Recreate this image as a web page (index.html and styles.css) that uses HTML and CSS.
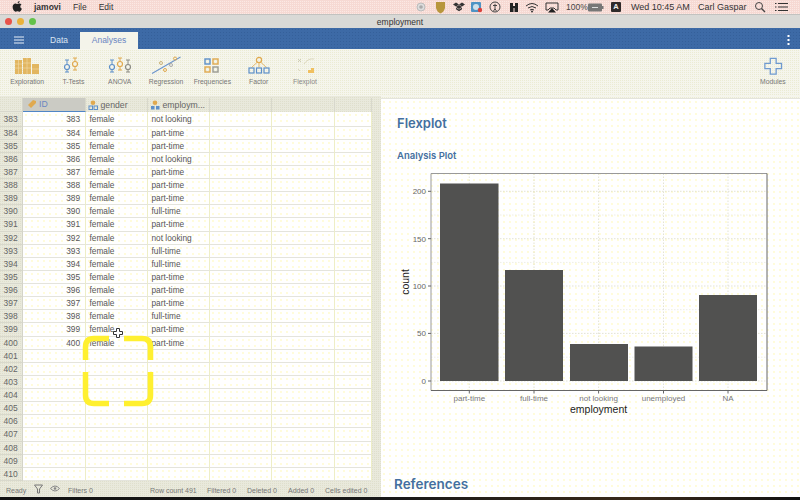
FILE: index.html
```html
<!DOCTYPE html>
<html lang="en">
<head>
<meta charset="utf-8">
<title>employment - jamovi</title>
<link rel="stylesheet" href="styles.css">
</head>
<body>
<div class="app">
  <header class="menubar">
    <svg class="apple" width="12" height="14" viewBox="0 0 12 14"><path d="M8.6 1c.1 1-.8 2.2-2 2.2C6.500 2.100 7.500 1.100 8.600 1zM6.200 3.900c.6 0 1.200-.5 2.200-.5.800 0 1.600.4 2.100 1.100-1.800 1-1.500 3.500.4 4.200-.5 1.300-1.500 3-2.500 3-.8 0-1-.5-1.900-.5s-1.200.5-1.900.5C3.300 11.700 1.600 9.500 1.600 7.100c0-2.300 1.500-3.600 2.800-3.600.8 0 1.300.4 1.800.4z" fill="#222"/></svg>
    <span class="menu-app">jamovi</span>
    <span class="menu-item">File</span>
    <span class="menu-item">Edit</span>
    <svg class="tray" width="196" height="14" viewBox="412 0 196 14">
      <circle cx="421" cy="7" r="4" fill="#ddd" stroke="#bbb"/><circle cx="421" cy="7" r="1.800" fill="#aaa"/>
      <path d="M436 2h9v6q-1 4-4.500 5.500Q437 12 436 8z" fill="#b8963c"/>
      <path d="M456 3l3 2-3 2-3-2zM462 3l3 2-3 2-3-2zM456 7.500l3-2 3 2-3 2zM459 10l3-1.800v1.600l-3 2-3-2V8.200z" fill="#333" transform="translate(0 -.5)"/>
      <rect x="471" y="2" width="10" height="10" rx="1" fill="#4f93c4"/><circle cx="476" cy="7" r="3" fill="#cfe0ea"/><circle cx="480" cy="10" r="2.200" fill="#d9413b"/>
      <circle cx="495" cy="7" r="5" fill="none" stroke="#444"/><path d="M495 3.800v6M493 5.500h4M495 9l-1.500 2M495 9l1.500 2" stroke="#444" fill="none"/>
      <path d="M510 3h3v3h2V3h3v9h-3.500V8h-1v4H510z" fill="#222"/>
      <path d="M526 6q6-5 12 0M528 8q4-3 8 0M530 10q2-1.500 4 0" fill="none" stroke="#333"/><circle cx="532" cy="11.500" r="1" fill="#333"/>
      <path d="M546 3h12v7h-2l-2-2h-4l-2 2h-2z" fill="none" stroke="#333"/><path d="M552 8l4 4.500h-8z" fill="#222"/>
      <text class="tray-text" x="566" y="10">100%</text>
      <rect x="588" y="3.500" width="14" height="8" rx="1" fill="#777"/><path d="M592 7.500h6" stroke="#ddd"/><rect x="602" y="6" width="1.500" height="3" fill="#777"/>
    </svg>
    <span class="menu-a">A</span>
    <span class="menu-clock">Wed 10:45 AM</span>
    <span class="menu-user">Carl Gaspar</span>
    <svg class="menu-search" width="12" height="12" viewBox="0 0 12 12"><circle cx="5" cy="5" r="3.500" fill="none" stroke="#444"/><path d="M7.500 7.500L11 11" stroke="#444" stroke-width="1.300"/></svg>
    <svg class="menu-list" width="13" height="10" viewBox="0 0 13 10"><path d="M3 1.500h10M3 5h10M3 8.500h10M0 1.500h1.500M0 5h1.500M0 8.500h1.500" stroke="#333"/></svg>
  </header>

  <div class="titlebar">
    <div class="lights"><i class="light red"></i><i class="light amber"></i><i class="light green"></i></div>
    <span class="title">employment</span>
  </div>

  <nav class="tabbar">
    <svg class="burger" width="10" height="8" viewBox="0 0 10 8"><path d="M0 1h10M0 4h10M0 7h10" stroke="#e6edf6" stroke-width="1"/></svg>
    <span class="tab">Data</span>
    <span class="tab tab-active">Analyses</span>
    <svg class="dots" width="3" height="10" viewBox="0 0 3 10"><path d="M0.500 0h2v2h-2zM0.500 4h2v2h-2zM0.500 8h2v2h-2z" fill="#fff"/></svg>
  </nav>

  <section class="ribbon">
    <div class="tool">
      <svg width="30" height="20" viewBox="0 0 30 20"><path d="M3 4h7v14H3zM11 2h8v16h-8zM20 8h7v10h-7z" fill="#e2b660"/><path d="M3 8h7M3 12h7M11 7h8M11 12h8M20 13h7M6.500 4v14M15 2v16" stroke="#f3dca8" stroke-width=".6" fill="none"/></svg>
      <span>Exploration</span>
    </div>
    <div class="tool">
      <svg width="30" height="20" viewBox="0 0 30 20"><path d="M9 4v12M7 4h4M7 16h4" stroke="#5d8fc9" fill="none"/><circle cx="9" cy="11" r="2.500" fill="#f5f5ea" stroke="#5d8fc9" stroke-width="1.200"/><path d="M17 2v12M15 2h4M15 14h4" stroke="#e0a94f" fill="none"/><circle cx="17" cy="8" r="2.500" fill="#f5f5ea" stroke="#e0a94f" stroke-width="1.200"/></svg>
      <span>T-Tests</span>
    </div>
    <div class="tool">
      <svg width="30" height="20" viewBox="0 0 30 20"><path d="M7 4v12M5 4h4M5 16h4" stroke="#5d8fc9" fill="none"/><circle cx="7" cy="11" r="2.500" fill="#f5f5ea" stroke="#5d8fc9" stroke-width="1.200"/><path d="M15 2v12M13 2h4M13 14h4" stroke="#e0a94f" fill="none"/><circle cx="15" cy="8" r="2.500" fill="#f5f5ea" stroke="#e0a94f" stroke-width="1.200"/><path d="M23 4v12M21 4h4M21 16h4" stroke="#8c8c84" fill="none"/><circle cx="23" cy="11" r="2.500" fill="#f5f5ea" stroke="#8c8c84" stroke-width="1.200"/></svg>
      <span>ANOVA</span>
    </div>
    <div class="tool">
      <svg width="30" height="20" viewBox="0 0 30 20"><path d="M1 17.500L29.500 1" stroke="#6b95cc" stroke-width="1.100" fill="none"/><circle cx="10" cy="7" r="1.500" fill="none" stroke="#c9b37a"/><circle cx="24" cy="2.500" r="1.500" fill="none" stroke="#e0a94f"/><circle cx="20" cy="9" r="1.500" fill="none" stroke="#aaa"/><circle cx="14" cy="14" r="1.500" fill="none" stroke="#e0a94f"/></svg>
      <span>Regression</span>
    </div>
    <div class="tool">
      <svg width="30" height="20" viewBox="0 0 30 20"><rect x="8" y="3" width="5" height="5" fill="none" stroke="#5d8fc9" stroke-width="1.400"/><rect x="16" y="3" width="5" height="5" fill="none" stroke="#e0a94f" stroke-width="1.400"/><rect x="8" y="11" width="5" height="5" fill="none" stroke="#e0a94f" stroke-width="1.400"/><rect x="16" y="11" width="5" height="5" fill="none" stroke="#9a9a92" stroke-width="1.400"/></svg>
      <span>Frequencies</span>
    </div>
    <div class="tool">
      <svg width="30" height="20" viewBox="0 0 30 20"><circle cx="15" cy="4" r="2.600" fill="none" stroke="#e0a94f" stroke-width="1.200"/><path d="M13.500 6L7.500 11.500M15 7v4.500M16.500 6L22.500 11.500" stroke="#e0a94f" stroke-width=".8" fill="none"/><rect x="5" y="12" width="5" height="5" fill="none" stroke="#5d8fc9" stroke-width="1.200"/><rect x="12.500" y="12" width="5" height="5" fill="none" stroke="#5d8fc9" stroke-width="1.200"/><rect x="20" y="12" width="5" height="5" fill="none" stroke="#5d8fc9" stroke-width="1.200"/></svg>
      <span>Factor</span>
    </div>
    <div class="tool tool-dim">
      <svg width="30" height="20" viewBox="0 0 30 20"><path d="M14 8q4-6 10-5" stroke="#ddd8c0" fill="none"/><path d="M8 3l3 3M11 3l-3 3" stroke="#cfcdb8" fill="none"/><path d="M8 13l2 2" stroke="#ddd8c0"/><path d="M18 17v-3h3v3zM21 17v-5h3v5z" fill="#f0c060"/></svg>
      <span>Flexplot</span>
    </div>
    <div class="tool tool-end">
      <svg width="30" height="20" viewBox="0 0 30 20"><path d="M12 3h6v5h5.500v5.500H18V19h-6v-5.500H6.500V8H12z" fill="none" stroke="#6f9ad0" stroke-width="1.300" transform="translate(.5 -.5) scale(.98)"/></svg>
      <span>Modules</span>
    </div>
  </section>

  <main class="main">
    <div class="left">
      <div class="sheet">
        <div class="row head">
          <div class="c rn"></div>
          <div class="c hc sel"><svg width="10" height="10" viewBox="0 0 10 10"><path d="M1 6l5-5 3 1v2L4 9z" fill="#e0a94f"/></svg>ID</div>
          <div class="c hc"><svg width="11" height="10" viewBox="0 0 11 10"><circle cx="5" cy="2.800" r="2.300" fill="#e0a94f"/><rect x="1" y="6" width="3.500" height="3.500" fill="none" stroke="#5d8fc9"/><rect x="6" y="6" width="3.500" height="3.500" fill="none" stroke="#5d8fc9"/></svg>gender</div>
          <div class="c hc"><svg width="11" height="10" viewBox="0 0 11 10"><circle cx="5" cy="2.800" r="2.300" fill="#e0a94f"/><rect x="1" y="6" width="3.500" height="3.500" fill="#5d8fc9"/><rect x="6" y="6" width="3.500" height="3.500" fill="#5d8fc9"/></svg>employm...</div>
          <div class="c hc"></div><div class="c hc"></div><div class="c hc"></div>
        </div>
        <div class="row first"><div class="c rn">383</div><div class="c num">383</div><div class="c">female</div><div class="c">not looking</div><div class="c"></div><div class="c"></div><div class="c"></div></div>
        <div class="row"><div class="c rn">384</div><div class="c num">384</div><div class="c">female</div><div class="c">part-time</div><div class="c"></div><div class="c"></div><div class="c"></div></div>
        <div class="row"><div class="c rn">385</div><div class="c num">385</div><div class="c">female</div><div class="c">part-time</div><div class="c"></div><div class="c"></div><div class="c"></div></div>
        <div class="row"><div class="c rn">386</div><div class="c num">386</div><div class="c">female</div><div class="c">not looking</div><div class="c"></div><div class="c"></div><div class="c"></div></div>
        <div class="row"><div class="c rn">387</div><div class="c num">387</div><div class="c">female</div><div class="c">part-time</div><div class="c"></div><div class="c"></div><div class="c"></div></div>
        <div class="row"><div class="c rn">388</div><div class="c num">388</div><div class="c">female</div><div class="c">part-time</div><div class="c"></div><div class="c"></div><div class="c"></div></div>
        <div class="row"><div class="c rn">389</div><div class="c num">389</div><div class="c">female</div><div class="c">part-time</div><div class="c"></div><div class="c"></div><div class="c"></div></div>
        <div class="row"><div class="c rn">390</div><div class="c num">390</div><div class="c">female</div><div class="c">full-time</div><div class="c"></div><div class="c"></div><div class="c"></div></div>
        <div class="row"><div class="c rn">391</div><div class="c num">391</div><div class="c">female</div><div class="c">part-time</div><div class="c"></div><div class="c"></div><div class="c"></div></div>
        <div class="row"><div class="c rn">392</div><div class="c num">392</div><div class="c">female</div><div class="c">not looking</div><div class="c"></div><div class="c"></div><div class="c"></div></div>
        <div class="row"><div class="c rn">393</div><div class="c num">393</div><div class="c">female</div><div class="c">full-time</div><div class="c"></div><div class="c"></div><div class="c"></div></div>
        <div class="row"><div class="c rn">394</div><div class="c num">394</div><div class="c">female</div><div class="c">full-time</div><div class="c"></div><div class="c"></div><div class="c"></div></div>
        <div class="row"><div class="c rn">395</div><div class="c num">395</div><div class="c">female</div><div class="c">part-time</div><div class="c"></div><div class="c"></div><div class="c"></div></div>
        <div class="row"><div class="c rn">396</div><div class="c num">396</div><div class="c">female</div><div class="c">part-time</div><div class="c"></div><div class="c"></div><div class="c"></div></div>
        <div class="row"><div class="c rn">397</div><div class="c num">397</div><div class="c">female</div><div class="c">part-time</div><div class="c"></div><div class="c"></div><div class="c"></div></div>
        <div class="row"><div class="c rn">398</div><div class="c num">398</div><div class="c">female</div><div class="c">full-time</div><div class="c"></div><div class="c"></div><div class="c"></div></div>
        <div class="row"><div class="c rn">399</div><div class="c num">399</div><div class="c">female</div><div class="c">part-time</div><div class="c"></div><div class="c"></div><div class="c"></div></div>
        <div class="row"><div class="c rn">400</div><div class="c num">400</div><div class="c">female</div><div class="c">part-time</div><div class="c"></div><div class="c"></div><div class="c"></div></div>
        <div class="row"><div class="c rn">401</div><div class="c"></div><div class="c"></div><div class="c"></div><div class="c"></div><div class="c"></div><div class="c"></div></div>
        <div class="row"><div class="c rn">402</div><div class="c"></div><div class="c"></div><div class="c"></div><div class="c"></div><div class="c"></div><div class="c"></div></div>
        <div class="row"><div class="c rn">403</div><div class="c"></div><div class="c"></div><div class="c"></div><div class="c"></div><div class="c"></div><div class="c"></div></div>
        <div class="row"><div class="c rn">404</div><div class="c"></div><div class="c"></div><div class="c"></div><div class="c"></div><div class="c"></div><div class="c"></div></div>
        <div class="row"><div class="c rn">405</div><div class="c"></div><div class="c"></div><div class="c"></div><div class="c"></div><div class="c"></div><div class="c"></div></div>
        <div class="row"><div class="c rn">406</div><div class="c"></div><div class="c"></div><div class="c"></div><div class="c"></div><div class="c"></div><div class="c"></div></div>
        <div class="row"><div class="c rn">407</div><div class="c"></div><div class="c"></div><div class="c"></div><div class="c"></div><div class="c"></div><div class="c"></div></div>
        <div class="row"><div class="c rn">408</div><div class="c"></div><div class="c"></div><div class="c"></div><div class="c"></div><div class="c"></div><div class="c"></div></div>
        <div class="row"><div class="c rn">409</div><div class="c"></div><div class="c"></div><div class="c"></div><div class="c"></div><div class="c"></div><div class="c"></div></div>
        <div class="row"><div class="c rn">410</div><div class="c"></div><div class="c"></div><div class="c"></div><div class="c"></div><div class="c"></div><div class="c"></div></div>
      </div>
      <footer class="status">
        <span class="st-ready">Ready</span>
        <svg class="st-filter" width="9" height="10" viewBox="0 0 9 10"><path d="M.5 1h8L5.500 5v4h-2V5z" fill="none" stroke="#777"/></svg>
        <svg class="st-eye" width="10" height="7" viewBox="0 0 10 7"><path d="M.5 3.500q4.500-5 9 0q-4.500 5-9 0z" fill="none" stroke="#888"/><circle cx="5" cy="3.500" r="1.300" fill="#888"/></svg>
        <span class="st-filters">Filters 0</span>
        <span class="st-count">Row count 491</span>
        <span class="st-filtered">Filtered 0</span>
        <span class="st-deleted">Deleted 0</span>
        <span class="st-added">Added 0</span>
        <span class="st-edited">Cells edited 0</span>
      </footer>
      <svg class="marker" width="76" height="76" viewBox="0 0 76 76"><path d="M5.500 27V14Q5.500 5.500 14 5.500H29M44 5.500H62Q70.500 5.500 70.500 14V27M70.500 39V62Q70.500 70.500 62 70.500H44M29 70.500H14Q5.500 70.500 5.500 62V39" fill="none" stroke="#fff030" stroke-width="5.500"/></svg>
      <svg class="cursor" width="10" height="10" viewBox="0 0 10 10"><path d="M3.500 .5h3v3h3v3h-3v3h-3v-3h-3v-3h3z" fill="#fff" stroke="#333"/></svg>
    </div>

    <article class="results">
      <h1 class="h-main">Flexplot</h1>
      <h2 class="h-sub">Analysis Plot</h2>
      <svg class="plot" width="400" height="255" viewBox="395 165 400 255">
        <g stroke="#dcdcc8" stroke-width=".8" stroke-dasharray="1.500 1.500" fill="none">
          <path d="M431 191.300H767M431 238.700H767M431 286H767M431 333.400H767M431 381H767"/>
          <path d="M431 215H767M431 262.400H767M431 309.700H767M431 357.200H767" stroke-width=".5"/>
          <path d="M469.300 173.500V390.500M534 173.500V390.500M598.600 173.500V390.500M663.500 173.500V390.500M728 173.500V390.500"/>
        </g>
        <g fill="#515150">
          <rect x="440" y="183.500" width="58.500" height="197.500"/>
          <rect x="505" y="270" width="58" height="111"/>
          <rect x="570" y="344" width="58" height="37"/>
          <rect x="634.500" y="346.500" width="58" height="34.500"/>
          <rect x="699" y="295" width="58" height="86"/>
        </g>
        <path d="M431 390.500V173.500H767" fill="none" stroke="#999"/>
        <path d="M767 173.500V390.500H431" fill="none" stroke="#666"/>
        <g stroke="#666" fill="none">
          <path d="M428 191.300h3M428 238.700h3M428 286h3M428 333.400h3M428 381h3"/>
          <path d="M469.300 390.500v3M534 390.500v3M598.600 390.500v3M663.500 390.500v3M728 390.500v3"/>
        </g>
        <g class="tick-y">
          <text x="426" y="194.300">200</text>
          <text x="426" y="241.700">150</text>
          <text x="426" y="289">100</text>
          <text x="426" y="336.400">50</text>
          <text x="426" y="384">0</text>
        </g>
        <g class="tick-x">
          <text x="469.300" y="401">part-time</text>
          <text x="534" y="401">full-time</text>
          <text x="598.600" y="401">not looking</text>
          <text x="663.500" y="401">unemployed</text>
          <text x="728" y="401">NA</text>
        </g>
        <text class="axis-x" x="598.600" y="412.500">employment</text>
        <text class="axis-y" transform="translate(409 282) rotate(-90)">count</text>
      </svg>
      <h1 class="h-refs">References</h1>
    </article>
  </main>
  <div class="desktop"></div>
</div>
</body>
</html>
```

FILE: styles.css
```css
* { box-sizing: border-box; }
html, body { margin: 0; padding: 0; }
body { width: 800px; height: 500px; overflow: hidden; font-family: "Liberation Sans", Arial, sans-serif; color: #444; background: #000; }
.app { width: 800px; height: 500px; display: flex; flex-direction: column; position: relative; }

/* mac menu bar */
.menubar {
  height: 14px; display: flex; align-items: center; font-size: 8.500px; color: #333;
  background-color: #f6d9d3;
  background-image: linear-gradient(45deg, #fbe9e4 25%, transparent 25%, transparent 75%, #fbe9e4 75%);
  background-size: 2px 2px;
}
.apple { margin-left: 11px; }
.menu-app { margin-left: 11px; font-weight: 700; }
.menu-item { margin-left: 12px; }
.menu-item + .menu-item { margin-left: 12px; }
.tray { position: absolute; left: 412px; top: 0; }
.tray-text { font-size: 8.500px; fill: #444; font-family: "Liberation Sans", Arial, sans-serif; }
.menu-a { position: absolute; left: 611px; top: 2px; width: 10px; height: 10px; background: #2f2a2a; color: #eee; font-size: 7.500px; font-weight: 700; text-align: center; line-height: 10px; border-radius: 1px; }
.menu-clock { position: absolute; left: 631px; top: 1px; font-size: 9px; line-height: 12px; }
.menu-user { position: absolute; left: 698px; top: 1px; font-size: 9px; line-height: 12px; }
.menu-search { position: absolute; left: 754px; top: 1px; }
.menu-list { position: absolute; left: 775px; top: 2px; }

/* window title */
.titlebar {
  height: 14px; position: relative; display: flex; align-items: center; justify-content: center;
  background-color: #d9d9d6; border-top: 1px solid #c2c2c0; font-size: 8.500px; color: #333;
}
.lights { position: absolute; left: 5px; top: 2.500px; display: flex; gap: 5px; }
.light { width: 7px; height: 7px; border-radius: 50%; display: block; }
.red { background: #e8534a; }
.amber { background: #eab13a; }
.green { background: #64c24a; }

/* blue tab bar */
.tabbar {
  height: 21px; display: flex; align-items: flex-end; position: relative;
  background-color: #3d6aa6;
  background-image: radial-gradient(#35609a 0.7px, transparent 0.8px);
  background-size: 3px 3px;
  font-size: 8.500px;
}
.burger { position: absolute; left: 14px; top: 8px; }
.tab { height: 17px; line-height: 16px; color: #dbe5f2; text-align: center; margin-left: 50px; width: 18px; white-space: nowrap; display: flex; justify-content: center; }
.tab-active { margin-left: 12px; width: 58px; background: #f4f4ea; color: #6a86c2; }
.dots { position: absolute; right: 10.500px; top: 7px; }

/* analyses ribbon */
.ribbon {
  height: 47px; display: flex; padding-left: 4px; padding-top: 7px;
  background-color: #f5f5ec;
  background-image: linear-gradient(45deg, #ebebd3 25%, transparent 25%, transparent 75%, #ebebd3 75%);
  background-size: 2px 2px;
}
.tool { width: 46.300px; display: flex; flex-direction: column; align-items: center; flex: none; }
.tool svg { flex: none; }
.tool span { font-size: 6.800px; color: #777; line-height: 8px; margin-top: 2px; white-space: nowrap; }
.tool-dim span { color: #888; }
.tool-end { margin-left: auto; margin-right: 4px; }

/* main split */
.main {
  flex: 1; display: flex; min-height: 0;
  background-color: #f5f5ec;
  background-image: linear-gradient(45deg, #ebebd3 25%, transparent 25%, transparent 75%, #ebebd3 75%);
  background-size: 2px 2px;
}
.left {
  width: 381px; flex: none; display: flex; flex-direction: column; position: relative; padding-top: 2px;
  background-color: #e9e9dc;
  background-image: linear-gradient(45deg, #dfdfcc 25%, transparent 25%, transparent 75%, #dfdfcc 75%);
  background-size: 2px 2px;
}
.sheet { width: 372px; height: 383.500px; flex: none; font-size: 8.300px; color: #555; }
.row { display: grid; grid-template-columns: 23px 63px 62px 62px 62px 63px 37px; height: 13.130px; }
.row.head { height: 13.500px; }
.row.first { height: 15px; }
.row.first .c { padding-top: 1.500px; }
.c {
  border-right: 1px solid #eeeec6; border-bottom: 1px solid #e4e4dc; padding: 0 4px 0 3.500px;
  line-height: 12px; white-space: nowrap; overflow: hidden;
  background-color: #fff;
  background-image: radial-gradient(#fff7b0 0.6px, transparent 0.8px);
  background-size: 6px 6px;
}
.c.rn { background: transparent; text-align: right; padding-right: 5px; border-right: 1px solid #d4d4c8; border-bottom-color: #d8d8cc; color: #666; font-size: 8.500px; }
.num { text-align: right; padding-right: 5px; }
.c.hc { background: transparent; display: flex; align-items: center; gap: 2px; font-size: 8.700px; padding: 0 0 0 1.500px; color: #666; border-bottom: none; border-right-color: #d8d8cc; }
.hc svg { flex: none; }
.c.sel { background: #cbcbc4; border-bottom: 1.500px solid #4f86c6; color: #6a86c2; padding-left: 4px; }
.status { flex: 1; position: relative; font-size: 7px; color: #777; display: flex; align-items: center; }
.status span { position: absolute; top: 4px; line-height: 9px; white-space: nowrap; }
.st-ready { left: 6px; }
.st-filter { position: absolute; left: 34px; top: 2px; }
.st-eye { position: absolute; left: 50px; top: 3px; }
.st-filters { left: 68px; }
.st-count { left: 150px; }
.st-filtered { left: 207px; }
.st-deleted { left: 247px; }
.st-added { left: 288px; }
.st-edited { left: 325px; }
.marker { position: absolute; left: 80px; top: 237px; }
.cursor { position: absolute; left: 113px; top: 232px; }

/* results */
.results {
  flex: 1; position: relative; overflow: hidden; margin-top: 2px; padding-left: 16px;
  background-color: #fff;
  background-image: radial-gradient(#fff7b0 0.6px, transparent 0.8px);
  background-size: 6px 6px;
  border-top: 1px solid #e4e4dc;
}
.h-main { margin: 0; font: 600 13px/16px Inter, "Liberation Sans", sans-serif; padding-top: 16px; color: #44709f; }
.h-sub { margin: 0; font: 600 9.500px/12px Inter, "Liberation Sans", sans-serif; padding-top: 19px; color: #44709f; }
.plot { position: absolute; left: 14px; top: 66px; }
.plot text { font-family: "Liberation Sans", Arial, sans-serif; }
.tick-y text { font-size: 8px; fill: #666; text-anchor: end; }
.tick-x text { font-size: 8px; fill: #777; text-anchor: middle; }
.axis-x { font-size: 10.500px; fill: #222; text-anchor: middle; }
.axis-y { font-size: 10.500px; fill: #222; text-anchor: middle; }
.h-refs { position: absolute; left: 13px; top: 377px; margin: 0; font: 600 13.500px/16px Inter, "Liberation Sans", sans-serif; color: #44709f; }

.desktop { height: 3px; background: linear-gradient(90deg, #111 0, #1a1a1a 50%, #3a2a1a 80%, #111 100%); }
```
